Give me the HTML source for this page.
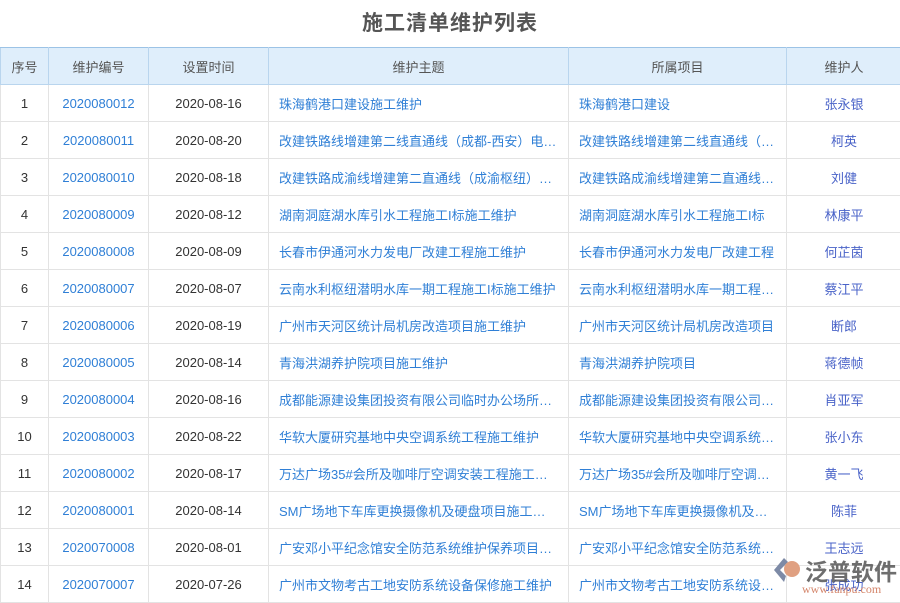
<html><head><style>
body{margin:0;width:900px;height:600px;overflow:hidden;background:#fff;font-family:"Liberation Sans","Noto Sans CJK SC",sans-serif;position:relative}
h1{margin:0;position:absolute;top:7px;left:0;width:900px;text-align:center;font-size:21px;font-weight:bold;color:#555;letter-spacing:1px}
table{position:absolute;top:47px;left:0;border-collapse:collapse;table-layout:fixed;width:901px;font-size:13px}
tr{height:37px}
td,th{border:1px solid #e3e3e3;height:37px;box-sizing:border-box;padding:0 10px;white-space:nowrap;overflow:hidden;text-overflow:ellipsis;text-align:center;color:#333}
th{background:#dfeefb;border-color:#b9d5ee;font-weight:normal;color:#555}
tr:first-child th{border-top:1px solid #9cc3e6}
td.b{color:#2f7fd6}td.l{text-align:left;color:#2f7fd6}td.p{color:#4a63c8}
.logo{position:absolute;left:805px;top:553px;font-size:23px;color:#555;opacity:.85;font-weight:bold}
.url{position:absolute;left:802px;top:582px;font-size:12px;color:#d4856a;font-family:"Liberation Serif",serif}
</style></head><body>
<h1>施工清单维护列表</h1>
<table>
<colgroup><col style="width:48px"><col style="width:100px"><col style="width:120px"><col style="width:300px"><col style="width:218px"><col style="width:115px"></colgroup>
<tr><th>序号</th><th>维护编号</th><th>设置时间</th><th>维护主题</th><th>所属项目</th><th>维护人</th></tr>
<tr><td>1</td><td class="b">2020080012</td><td>2020-08-16</td><td class="l">珠海鹤港口建设施工维护</td><td class="l">珠海鹤港口建设</td><td class="p">张永银</td></tr>
<tr><td>2</td><td class="b">2020080011</td><td>2020-08-20</td><td class="l">改建铁路线增建第二线直通线（成都-西安）电力施工维护</td><td class="l">改建铁路线增建第二线直通线（成都-西安）</td><td class="p">柯英</td></tr>
<tr><td>3</td><td class="b">2020080010</td><td>2020-08-18</td><td class="l">改建铁路成渝线增建第二直通线（成渝枢纽）施工维护</td><td class="l">改建铁路成渝线增建第二直通线（成渝枢纽）</td><td class="p">刘健</td></tr>
<tr><td>4</td><td class="b">2020080009</td><td>2020-08-12</td><td class="l">湖南洞庭湖水库引水工程施工I标施工维护</td><td class="l">湖南洞庭湖水库引水工程施工I标</td><td class="p">林康平</td></tr>
<tr><td>5</td><td class="b">2020080008</td><td>2020-08-09</td><td class="l">长春市伊通河水力发电厂改建工程施工维护</td><td class="l">长春市伊通河水力发电厂改建工程</td><td class="p">何芷茵</td></tr>
<tr><td>6</td><td class="b">2020080007</td><td>2020-08-07</td><td class="l">云南水利枢纽潜明水库一期工程施工I标施工维护</td><td class="l">云南水利枢纽潜明水库一期工程施工I标</td><td class="p">蔡江平</td></tr>
<tr><td>7</td><td class="b">2020080006</td><td>2020-08-19</td><td class="l">广州市天河区统计局机房改造项目施工维护</td><td class="l">广州市天河区统计局机房改造项目</td><td class="p">断郎</td></tr>
<tr><td>8</td><td class="b">2020080005</td><td>2020-08-14</td><td class="l">青海洪湖养护院项目施工维护</td><td class="l">青海洪湖养护院项目</td><td class="p">蒋德帧</td></tr>
<tr><td>9</td><td class="b">2020080004</td><td>2020-08-16</td><td class="l">成都能源建设集团投资有限公司临时办公场所施工维护</td><td class="l">成都能源建设集团投资有限公司临时</td><td class="p">肖亚军</td></tr>
<tr><td>10</td><td class="b">2020080003</td><td>2020-08-22</td><td class="l">华软大厦研究基地中央空调系统工程施工维护</td><td class="l">华软大厦研究基地中央空调系统工程</td><td class="p">张小东</td></tr>
<tr><td>11</td><td class="b">2020080002</td><td>2020-08-17</td><td class="l">万达广场35#会所及咖啡厅空调安装工程施工维护</td><td class="l">万达广场35#会所及咖啡厅空调安装</td><td class="p">黄一飞</td></tr>
<tr><td>12</td><td class="b">2020080001</td><td>2020-08-14</td><td class="l">SM广场地下车库更换摄像机及硬盘项目施工维护</td><td class="l">SM广场地下车库更换摄像机及硬盘</td><td class="p">陈菲</td></tr>
<tr><td>13</td><td class="b">2020070008</td><td>2020-08-01</td><td class="l">广安邓小平纪念馆安全防范系统维护保养项目施工</td><td class="l">广安邓小平纪念馆安全防范系统维护</td><td class="p">王志远</td></tr>
<tr><td>14</td><td class="b">2020070007</td><td>2020-07-26</td><td class="l">广州市文物考古工地安防系统设备保修施工维护</td><td class="l">广州市文物考古工地安防系统设备保修</td><td class="p">张成功</td></tr>
</table>
<svg style="position:absolute;left:772px;top:556px" width="30" height="28"><path d="M12 2 L2 14 L12 26 L14 20 L8 14 L16 6Z" fill="#7d8aa6"/><circle cx="20" cy="13" r="8" fill="#e0a081"/></svg>
<div class="logo">泛普软件</div>
<div class="url">www.fanpu.com</div>
</body></html>
